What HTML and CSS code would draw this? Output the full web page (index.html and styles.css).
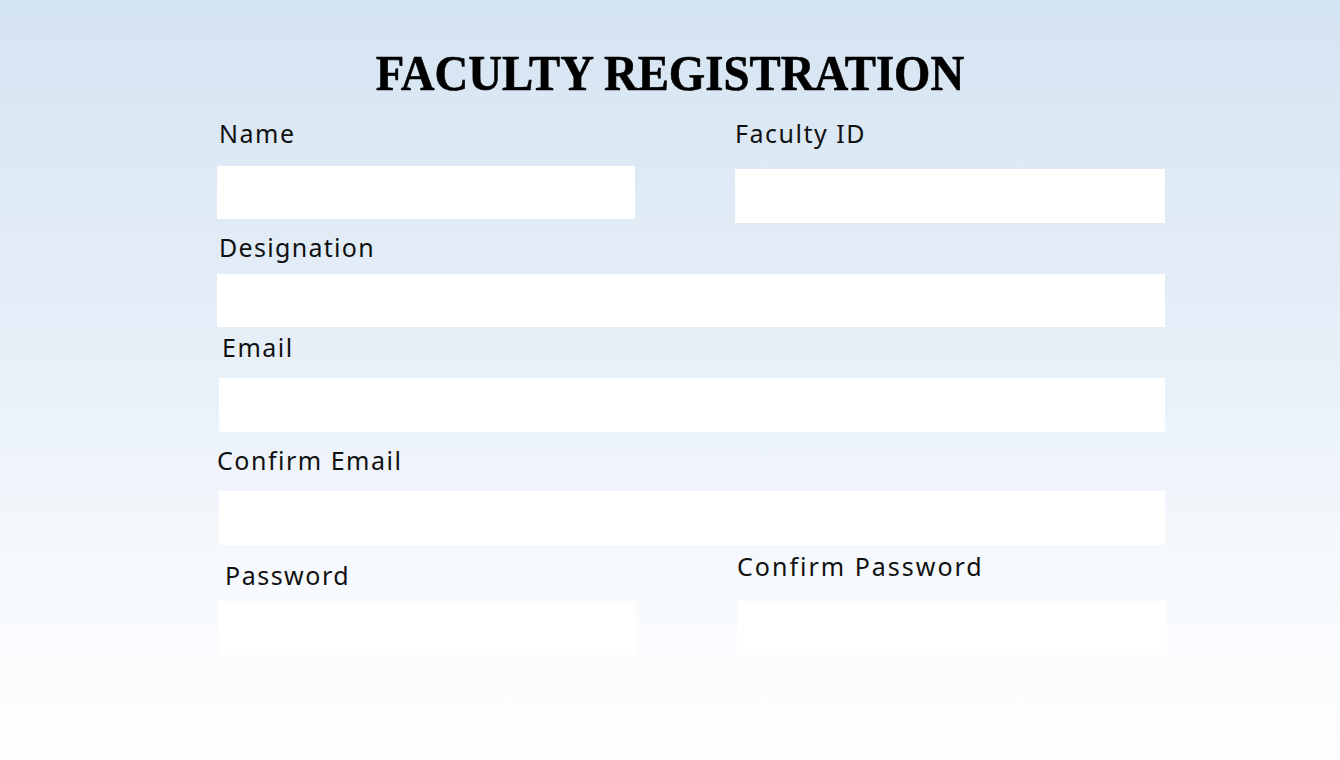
FILE: index.html
```html
<!DOCTYPE html>
<html lang="en">
<head>
<meta charset="utf-8">
<title>Faculty Registration</title>
<link rel="stylesheet" href="styles.css">
</head>
<body>
<main class="page">
  <h1 class="title"><span class="title-text">FACULTY REGISTRATION</span></h1>
  <form class="form">
    <div class="row row-top">
      <div class="field">
        <label class="label lbl-name">Name</label>
        <input class="box box-name" type="text">
      </div>
      <div class="field">
        <label class="label lbl-id">Faculty ID</label>
        <input class="box box-id" type="text">
      </div>
    </div>

    <label class="label lbl-desig">Designation</label>
    <input class="box box-desig" type="text">

    <label class="label lbl-email">Email</label>
    <input class="box box-email" type="text">

    <label class="label lbl-cemail">Confirm Email</label>
    <input class="box box-cemail" type="text">

    <div class="row row-pass">
      <div class="field">
        <label class="label lbl-pass">Password</label>
        <input class="box box-pass" type="password">
      </div>
      <div class="field">
        <label class="label lbl-cpass">Confirm Password</label>
        <input class="box box-cpass" type="password">
      </div>
    </div>
  </form>
</main>
</body>
</html>
```

FILE: styles.css
```css
* { box-sizing: border-box; }

html, body {
  margin: 0;
  padding: 0;
}

body {
  width: 1340px;
  height: 760px;
  overflow: hidden;
  background: linear-gradient(180deg, #d5e4f2 0%, #e6eff8 45%, #f6f9fd 75%, #fefefe 100%);
  font-family: "Noto Sans", "Open Sans", sans-serif;
  color: #111;
}

.page {
  padding-top: 48px;
}

.title {
  margin: 0;
  text-align: center;
  font-family: "Liberation Serif", "Times New Roman", serif;
  font-weight: 700;
  font-size: 51px;
  line-height: 50px;
  color: #000;
}

.title-text {
  display: inline-block;
  transform: scaleX(0.917);
  -webkit-text-stroke: 0.6px #000;
}

.form {
  margin: 20px 0 0 217px;
  width: 950px;
}

.label {
  display: block;
  font-size: 25px;
  line-height: 30px;
  letter-spacing: 1.5px;
  font-weight: 400;
  color: #111;
}

.box {
  display: block;
  border: 0;
  outline: none;
  background: #ffffff;
  padding: 0;
  margin: 0;
}

.row {
  display: grid;
}

.row-top {
  grid-template-columns: 418px 430px;
  column-gap: 100px;
  align-items: start;
}

.field {
  display: flex;
  flex-direction: column;
}

.lbl-name { padding-left: 2px; }
.box-name { margin-top: 18px; width: 418px; height: 53px; }

.lbl-id { padding-left: 0; }
.box-id { margin-top: 21px; width: 430px; height: 54px; }

.lbl-desig { margin-top: 9px; padding-left: 2px; letter-spacing: 1.3px; }
.box-desig { margin-top: 12px; width: 948px; height: 53px; }

.lbl-email { margin-top: 5px; padding-left: 5px; }
.box-email { margin-top: 16px; margin-left: 2px; width: 946px; height: 54px; }

.lbl-cemail { margin-top: 13px; padding-left: 0; }
.box-cemail { margin-top: 16px; margin-left: 2px; width: 946px; height: 54px; }

.row-pass {
  margin-top: 6px;
  margin-left: 2px;
  grid-template-columns: 417px 430px;
  column-gap: 101px;
}

.lbl-pass { margin-top: 9px; padding-left: 6px; }
.box-pass { margin-top: 11px; width: 417px; height: 54px; }

.lbl-cpass { padding-left: 0; letter-spacing: 2px; }
.box-cpass { margin-top: 20px; width: 430px; height: 54px; }
```
